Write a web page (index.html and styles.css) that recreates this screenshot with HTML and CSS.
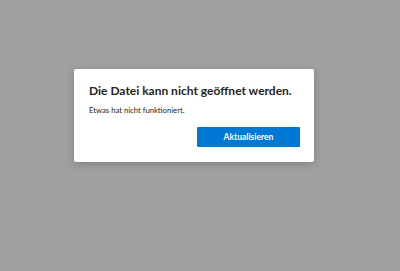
FILE: index.html
```html
<!DOCTYPE html>
<html lang="de">
<head>
    <meta charset="UTF-8">
    <meta name="viewport" content="width=device-width, initial-scale=1.0">
    <title>Fehler</title>
    <link rel="stylesheet" href="styles.css">
</head>
<body>
    <!-- Fehlerdialog -->
    <div class="dialog">
        <h1 class="dialog-title">Die Datei kann nicht geöffnet werden.</h1>
        <p class="dialog-text">Etwas hat nicht funktioniert.</p>
        <div class="dialog-actions">
            <button class="primary-button">Aktualisieren</button>
        </div>
    </div>
</body>
</html>
```

FILE: styles.css
```css
body {
    font-family: Lato, "Noto Sans", Arial, sans-serif;
    margin: 0;
    padding: 0;
    background-color: #a0a0a0;
    height: 271px;
    overflow: hidden;
}
.dialog {
    width: 240px;
    box-sizing: border-box;
    margin: 69px 0 0 74px;
    padding: 12px 14px 15px 15px;
    background-color: #ffffff;
    border-radius: 2px;
    box-shadow: 0 2px 8px rgba(0, 0, 0, 0.2);
}
.dialog-title {
    margin: 0;
    font-size: 12px;
    font-weight: 700;
    color: #252423;
    line-height: 20px;
    white-space: nowrap;
}
.dialog-text {
    margin: 3px 0 0;
    font-size: 7.7px;
    color: #252423;
    line-height: 12px;
}
.dialog-actions {
    display: flex;
    justify-content: flex-end;
    margin-top: 11px;
}
.primary-button {
    width: 103px;
    height: 20px;
    padding: 0;
    border: none;
    border-radius: 1px;
    background-color: #0078d4;
    color: #ffffff;
    font-family: inherit;
    font-size: 8.5px;
    font-weight: 700;
    cursor: pointer;
}
```
